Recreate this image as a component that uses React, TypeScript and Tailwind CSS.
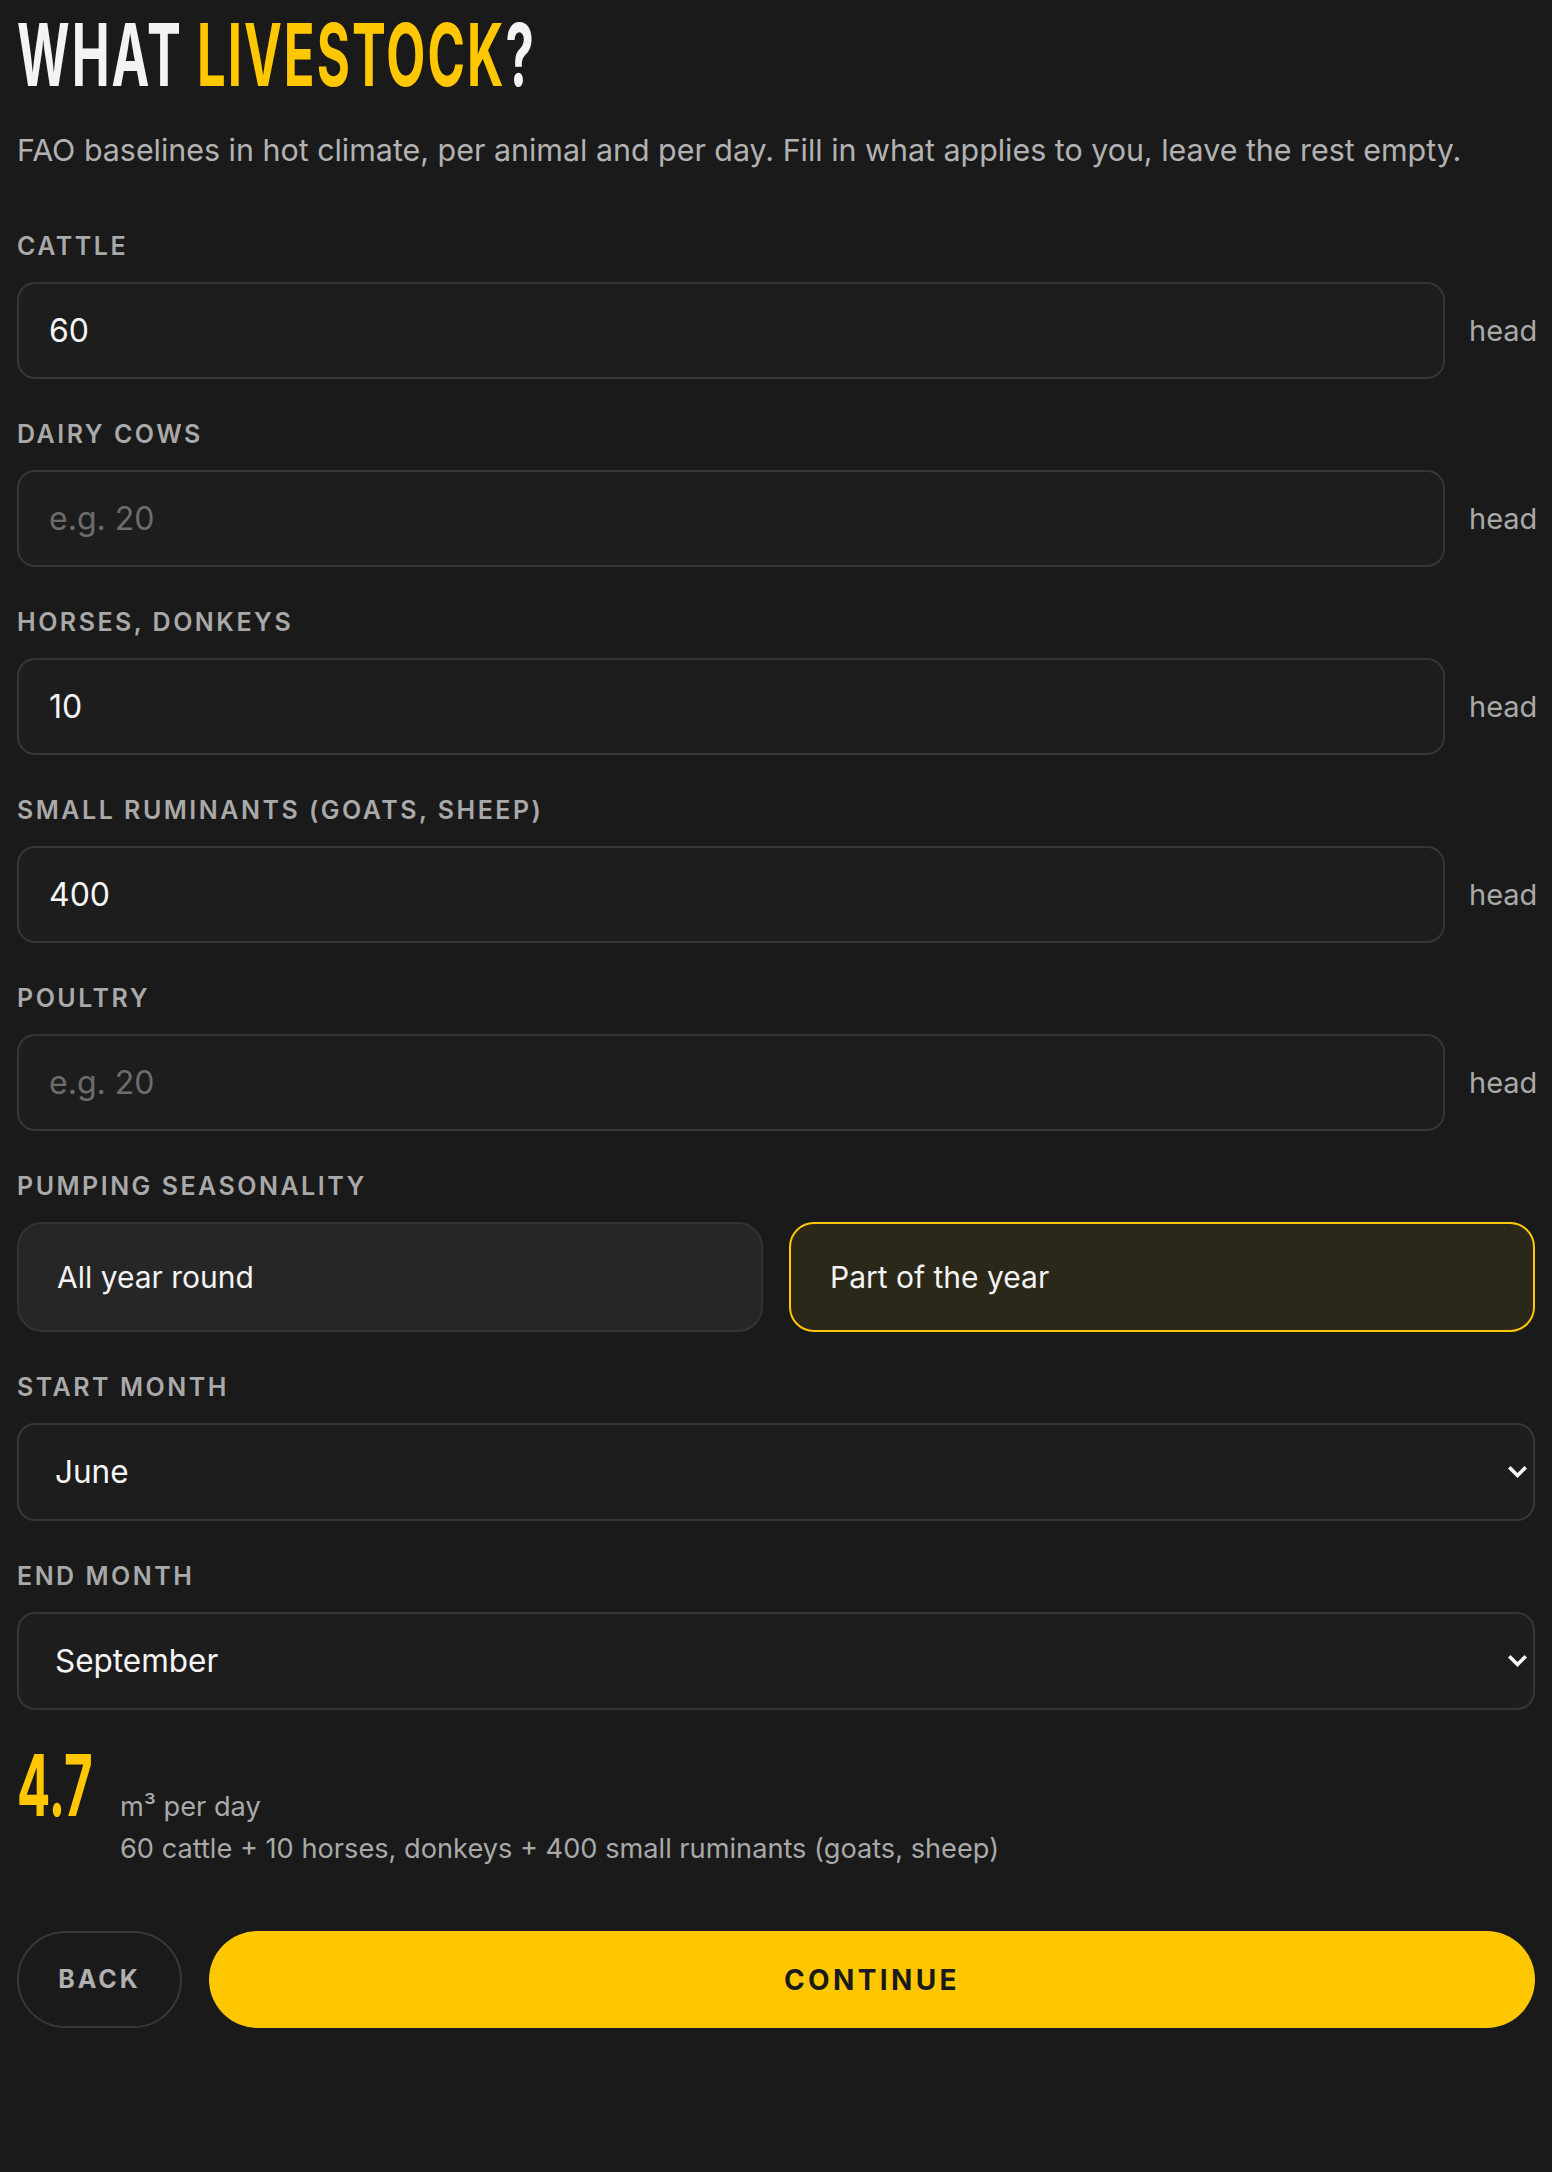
import React, { useState } from "react";

const animals = [
  { id: "cattle", label: "Cattle", value: "60" },
  { id: "dairy", label: "Dairy cows", value: "" },
  { id: "horses", label: "Horses, donkeys", value: "10" },
  { id: "small", label: "Small ruminants (goats, sheep)", value: "400" },
  { id: "poultry", label: "Poultry", value: "" },
];

const months = [
  "January",
  "February",
  "March",
  "April",
  "May",
  "June",
  "July",
  "August",
  "September",
  "October",
  "November",
  "December",
];

function Label({ children }: { children: React.ReactNode }) {
  return (
    <div className="mb-[21px] text-[25px] leading-[30px] font-semibold uppercase tracking-[0.1em] text-[#a9a9a9]">
      {children}
    </div>
  );
}

function MonthSelect({ label, value }: { label: string; value: string }) {
  return (
    <div>
      <Label>{label}</Label>
      <div className="relative">
        <select
          defaultValue={value}
          className="block h-[98px] w-full appearance-none rounded-[18px] border-2 border-[#363636] bg-[#1d1d1d] pl-[36px] text-[31.5px] text-[#f5f5f5] outline-none"
        >
          {months.map((m) => (
            <option key={m} value={m}>
              {m}
            </option>
          ))}
        </select>
        <svg
          className="pointer-events-none absolute right-[8px] top-1/2 -translate-y-1/2"
          width="19"
          height="13"
          viewBox="0 0 19 13"
          fill="none"
        >
          <path d="M2.5 3 L9.5 10 L16.5 3" stroke="#f5f5f5" strokeWidth="3.6" strokeLinecap="square" />
        </svg>
      </div>
    </div>
  );
}

export default function App() {
  const [seasonal, setSeasonal] = useState(true);

  return (
    <div className="min-h-screen bg-[#1a1a1a] px-[17px] pt-[13px] pb-[140px] font-[Inter,sans-serif]">
      {/* Heading */}
      <h1 className="h-[85px] whitespace-nowrap text-[86px] leading-[85px] font-bold text-[#f3f3f3]">
        <span className="inline-block origin-left scale-x-[0.59] tracking-[0.04em]">
          WHAT <span className="text-[#ffc700]">LIVESTOCK</span>?
        </span>
      </h1>
      <p className="mt-[30px] text-[30.4px] leading-[44px] text-[#b2b2b2]">
        FAO baselines in hot climate, per animal and per day. Fill in what applies to you, leave the rest empty.
      </p>

      <div className="mt-[59px] flex flex-col gap-[40px]">
        {animals.map((a) => (
          <div key={a.id}>
            <Label>{a.label}</Label>
            <div className="flex items-center gap-[24px]">
              <input
                defaultValue={a.value}
                placeholder="e.g. 20"
                inputMode="numeric"
                className="h-[97px] min-w-0 flex-1 rounded-[18px] border-2 border-[#363636] bg-[#1d1d1d] pl-[30px] text-[32px] text-[#f5f5f5] outline-none placeholder:text-[#6c6c6c]"
              />
              <span className="w-[66px] text-[29px] text-[#a9a9a9]">head</span>
            </div>
          </div>
        ))}

        {/* Seasonality */}
        <div>
          <Label>Pumping seasonality</Label>
          <div className="grid grid-cols-2 gap-[26px]">
            <button
              onClick={() => setSeasonal(false)}
              className={`h-[110px] rounded-[25px] border-2 pl-[38px] text-left text-[30px] text-[#f3f3f3] ${
                seasonal ? "border-[#333333] bg-[#262626]" : "border-[#ffc700] bg-[#2b2719]"
              }`}
            >
              All year round
            </button>
            <button
              onClick={() => setSeasonal(true)}
              className={`h-[110px] rounded-[25px] border-2 pl-[39px] text-left text-[30px] text-[#f3f3f3] ${
                seasonal ? "border-[#ffc700] bg-[#2b2719]" : "border-[#333333] bg-[#262626]"
              }`}
            >
              Part of the year
            </button>
          </div>
        </div>

        <MonthSelect label="Start month" value="June" />
        <MonthSelect label="End month" value="September" />
      </div>

      {/* Result */}
      <div className="mt-[34px] flex items-baseline gap-[22px]">
        <div className="w-[81px] shrink-0 text-[85px] leading-[84px] font-bold text-[#ffc700]">
          <span className="inline-block origin-left scale-x-[0.58]">4.7</span>
        </div>
        <div className="text-[27.2px] leading-[42px] text-[#a9a9a9]">
          <div>m³ per day</div>
          <div>60 cattle + 10 horses, donkeys + 400 small ruminants (goats, sheep)</div>
        </div>
      </div>

      {/* Actions */}
      <div className="mt-[61px] flex gap-[27px]">
        <button className="h-[97px] w-[165px] shrink-0 rounded-full border-2 border-[#383838] text-[25px] font-bold uppercase tracking-[0.12em] text-[#b0b0b0]">
          Back
        </button>
        <button className="h-[97px] flex-1 rounded-full bg-[#ffc700] text-[28px] font-bold uppercase tracking-[0.12em] text-[#1a1a1a]">
          Continue
        </button>
      </div>
    </div>
  );
}
